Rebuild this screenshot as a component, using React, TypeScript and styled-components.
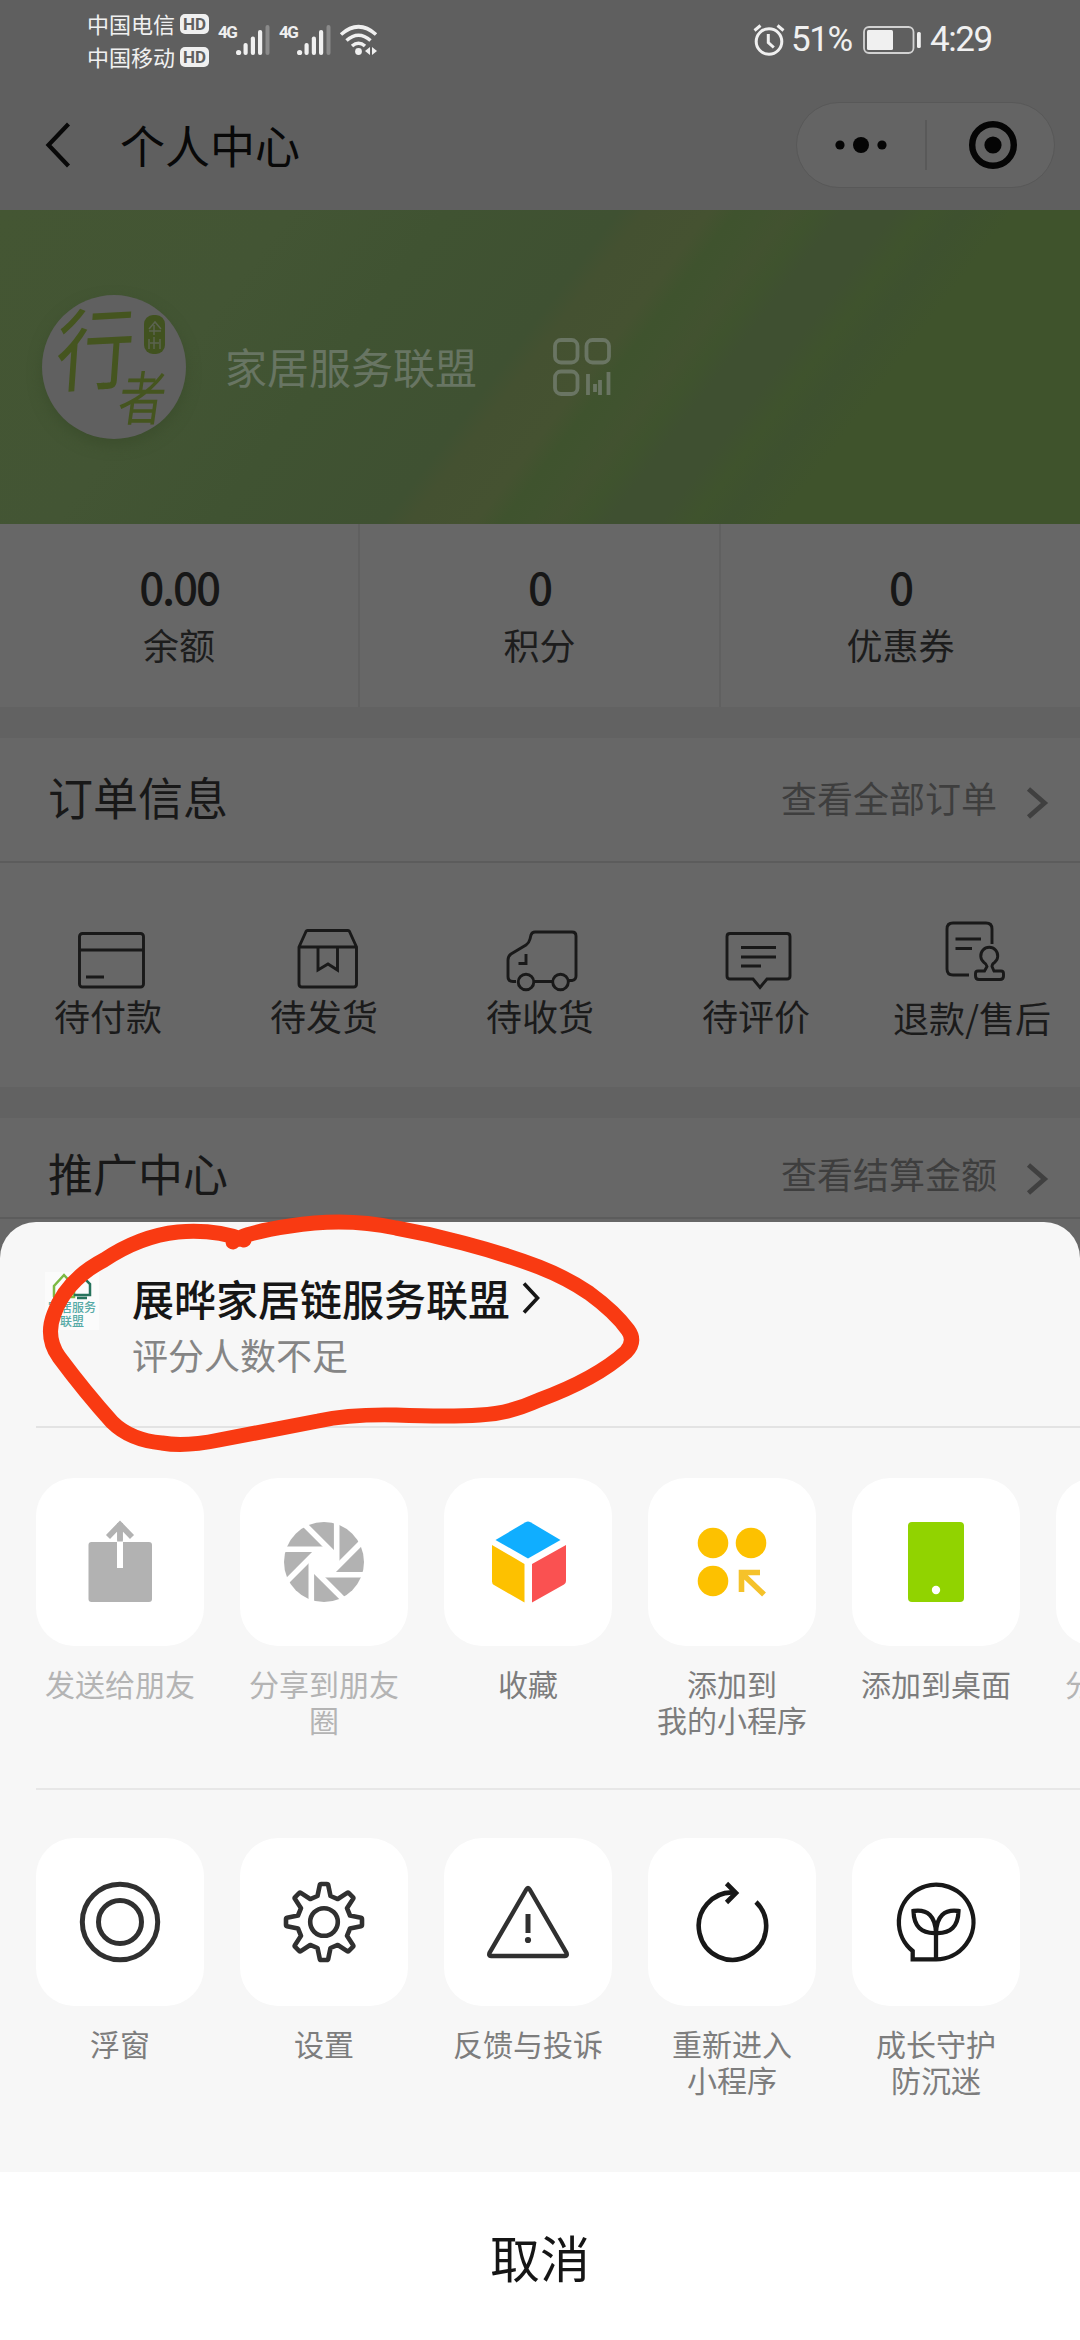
import React from "react";
import styled, { createGlobalStyle } from "styled-components";

const cjk = `"Noto Sans CJK SC", "Noto Sans", sans-serif`;

const Global = createGlobalStyle`
  * { box-sizing: border-box; }
  body { margin: 0; background: #676767; font-family: ${cjk}; }
  svg { display: block; flex: none; overflow: visible; }
`;

const Screen = styled.main`
  position: relative;
  display: flex;
  flex-direction: column;
  width: 1080px;
  height: 2340px;
  overflow: hidden;
  background: #676767;
`;

const Page = styled.section`
  display: flex;
  flex-direction: column;
  height: 1222px;
  flex: none;
`;

/* status bar */
const TopArea = styled.header`
  height: 210px;
  flex: none;
  background: #5f5f5f;
`;
const StatusBar = styled.div`
  display: flex;
  align-items: center;
  justify-content: space-between;
  height: 80px;
  padding: 0 86px 0 87px;
  color: #f0f0f0;
`;
const StatusGroup = styled.div`
  display: flex;
  align-items: center;
`;
const Carriers = styled.div`
  display: flex;
  flex-direction: column;
  margin-right: 9px;
`;
const Carrier = styled.div`
  display: flex;
  align-items: center;
  gap: 5px;
  height: 33px;
  font-size: 22px;
  line-height: 33px;
`;
const HdBadge = styled.span`
  width: 29px;
  height: 20px;
  margin-top: 0;
  border-radius: 5px;
  background: #f0f0f0;
  color: #5f5f5f;
  font: 700 17px/20px Roboto, sans-serif;
  text-align: center;
`;
const Signal = styled.div`
  display: flex;
  align-items: flex-start;
  width: 61px;
  height: 30px;
`;
const Net = styled.span`
  width: 18px;
  font: 700 17px/14px "Liberation Sans Narrow", Roboto, sans-serif;
  letter-spacing: -1.5px;
`;
const StatusNumber = styled.span<{ $w: number; $gap: number }>`
  width: ${(p) => p.$w}px;
  margin-left: ${(p) => p.$gap}px;
  font: 400 35px/40px Roboto, sans-serif;
  letter-spacing: -1.4px;
  white-space: nowrap;
`;

/* title bar */
const TitleBar = styled.div`
  display: flex;
  align-items: center;
  height: 130px;
  padding: 0 25px 0 46px;
`;
const PageTitle = styled.h1`
  flex: 1;
  margin: 0 0 0 50px;
  color: #080808;
  font-size: 45px;
  font-weight: 400;
  line-height: 60px;
`;
const Capsule = styled.div`
  display: flex;
  align-items: center;
  width: 259px;
  height: 86px;
  border: 1px solid #585858;
  border-radius: 43px;
  background: #646464;
`;
const CapsuleHalf = styled.div`
  display: flex;
  flex: 1;
  justify-content: center;
`;
const CapsuleRule = styled.i`
  width: 2px;
  height: 50px;
  background: #595959;
`;

/* profile banner */
const Banner = styled.div`
  display: flex;
  align-items: center;
  height: 314px;
  flex: none;
  padding-left: 42px;
  background: linear-gradient(
    127deg,
    #445633 0%, #435534 22%, #405332 34%, #3f5132 47%,
    #445131 49%, #455231 54%, #3f532e 56%, #40532f 58%,
    #425230 60%, #3f532e 62%, #3f5031 64%, #3f5031 68%,
    #3f532d 70.5%, #3e512f 73%, #3f532c 77%, #3f532c 100%
  );
`;
const Avatar = styled.div`
  width: 144px;
  height: 144px;
  border-radius: 50%;
  background: #606060;
  overflow: hidden;
  box-shadow: 0 6px 14px #3c4e2d;
`;
const UserName = styled.div`
  margin: -3px 76px 0 39px;
  color: #687563;
  font-size: 42px;
  line-height: 60px;
`;

/* balance row */
const Stats = styled.div`
  display: grid;
  grid-template-columns: 358px 361px 361px;
  height: 183px;
  flex: none;
`;
const Stat = styled.div`
  display: flex;
  flex-direction: column;
  align-items: center;
  padding-top: 36px;
  & + & { border-left: 2px solid #606060; }
`;
const StatValue = styled.b`
  color: #171717;
  font-size: 44px;
  font-weight: 500;
  letter-spacing: -2.2px;
  line-height: 52px;
`;
const StatLabel = styled.span`
  margin-top: 2px;
  color: #1d1d1d;
  font-size: 36px;
  line-height: 60px;
`;
const Band = styled.div`
  height: 31px;
  flex: none;
  background: #626262;
`;

/* sections */
const SectionHead = styled.div<{ $h: number; $top?: number }>`
  display: flex;
  align-items: center;
  height: ${(p) => p.$h}px;
  flex: none;
  padding: ${(p) => p.$top ?? 0}px 33px 0 48px;
  border-bottom: 2px solid #5c5c5c;
`;
const SectionTitle = styled.h2`
  flex: 1;
  margin: -6px 0 0;
  color: #181818;
  font-size: 45px;
  font-weight: 400;
  line-height: 60px;
`;
const SectionLink = styled.span`
  margin: -5px 28px 0 0;
  color: #3e3e3e;
  font-size: 36px;
  line-height: 54px;
`;
const Orders = styled.div`
  display: grid;
  grid-template-columns: repeat(5, 216px);
  height: 224px;
  flex: none;
`;
const Order = styled.div`
  display: flex;
  flex-direction: column;
  align-items: center;
  padding-top: 56px;
`;
const OrderLabel = styled.span<{ $drop?: boolean }>`
  margin-top: ${(p) => (p.$drop ? -7 : -9)}px;
  color: #1b1b1b;
  font-size: 36px;
  line-height: 54px;
  white-space: nowrap;
`;

/* bottom sheet */
const Sheet = styled.section`
  display: flex;
  flex-direction: column;
  flex: 1;
  border-radius: 36px 36px 0 0;
  background: #f7f7f7;
  overflow: hidden;
`;
const AppInfo = styled.div`
  display: flex;
  align-items: flex-start;
  height: 206px;
  flex: none;
  margin-left: 36px;
  padding: 50px 0 0 9px;
  border-bottom: 2px solid #e3e3e3;
`;
const AppLogo = styled.div`
  display: flex;
  flex-direction: column;
  align-items: center;
  width: 54px;
  height: 58px;
  background: #fbfbfb;
  color: #56aaa6;
  font-size: 12px;
  font-weight: 500;
  line-height: 14px;
`;
const AppText = styled.div`
  display: flex;
  flex-direction: column;
  margin-left: 33px;
`;
const AppName = styled.div`
  display: flex;
  align-items: center;
  gap: 12px;
  margin-top: -4px;
  color: #161616;
  font-size: 42px;
  font-weight: 500;
  line-height: 60px;
`;
const AppRating = styled.div`
  margin-top: -1px;
  color: #858585;
  font-size: 36px;
  line-height: 54px;
`;
const Actions = styled.div<{ $h: number; $top: number; $rule?: boolean }>`
  display: flex;
  gap: 36px;
  height: ${(p) => p.$h}px;
  flex: none;
  margin-left: 36px;
  padding-top: ${(p) => p.$top}px;
  border-bottom: ${(p) => (p.$rule ? "2px solid #e7e7e7" : "0")};
`;
const Action = styled.div`
  display: flex;
  flex-direction: column;
  align-items: center;
  width: 168px;
  flex: none;
`;
const Tile = styled.div`
  display: flex;
  align-items: center;
  justify-content: center;
  width: 168px;
  height: 168px;
  border-radius: 38px;
  background: #fff;
`;
const ActionLabel = styled.span<{ $dim?: boolean }>`
  margin-top: 20px;
  color: ${(p) => (p.$dim ? "#b4b4b4" : "#7d7d7d")};
  font-size: 30px;
  line-height: 35.5px;
  text-align: center;
  white-space: pre;
`;
const Cancel = styled.button`
  flex: 1;
  border: 0;
  padding: 0;
  background: #fff;
  color: #151515;
  font: 400 50px/70px ${cjk};
`;
const Annotation = styled.svg`
  position: absolute;
  left: 0;
  top: 1200px;
  pointer-events: none;
`;

const Bars = () => (
  <svg width="34" height="30" fill="#f0f0f0">
    <circle cx="2.6" cy="27.5" r="2.6" />
    <rect x="7.5" y="18" width="4.2" height="12" rx="2" />
    <rect x="14.8" y="11.5" width="4.2" height="18.5" rx="2" />
    <rect x="22" y="5" width="4.2" height="25" rx="2" />
    <rect x="29.5" y="0" width="4" height="30" rx="2" fill="#8a8a8a" />
  </svg>
);

const Wifi = () => (
  <svg width="38" height="30" fill="none" stroke="#f0f0f0" strokeWidth="3.6">
    <path d="M1 9.500Q18.500 -6 36 9.500M6.500 15.500Q18.500 5 30.500 15.500M12 21Q18.500 15.500 25 21" />
    <circle cx="18.500" cy="26.500" r="3.400" fill="#f0f0f0" stroke="none" />
    <path d="M30 22v8l-5-4zM32 22v8l5-4z" fill="#f0f0f0" stroke="none" />
  </svg>
);

const Alarm = () => (
  <svg width="32" height="32" fill="none" stroke="#f0f0f0" strokeWidth="3">
    <circle cx="16" cy="17.5" r="12.8" />
    <path d="M1.500 6.500L7.500 1.500M30.500 6.500L24.500 1.500" />
    <path d="M15.300 10v8.500l5.500 5" />
  </svg>
);

const BatterySvg = styled.svg`
  margin-left: 10px;
`;
const Battery = () => (
  <BatterySvg width="58" height="28">
    <rect x="1" y="1" width="49.5" height="26" rx="5" fill="none" stroke="#d2d2d2" strokeWidth="1.8" />
    <rect x="4" y="4" width="26" height="20" rx="1.5" fill="#f0f0f0" />
    <rect x="54" y="6" width="3.8" height="16" rx="1.5" fill="#f0f0f0" />
  </BatterySvg>
);

const SealAvatar = () => (
  <svg width="144" height="144" viewBox="0 0 144 144" fontFamily={cjk} fill="#45551f">
    <text fontSize="84" fontWeight="400" transform="translate(12 90) rotate(-3) skewX(-7) scale(.93 1.060)">行</text>
    <text fontSize="52" fontWeight="400" transform="translate(74 125) skewX(-8) scale(.9 1.120)">者</text>
    <rect x="102" y="20" width="21" height="39" rx="9" fill="#41521f" />
    <path d="M107 34L113 27L119 34M107 36H119M112 30V40M107 44V54M112 42V54M118 44V54M108 48H117" fill="none" stroke="#5b6350" strokeWidth="1.500" />
  </svg>
);

const QrGlyph = () => (
  <svg width="58" height="58" fill="none" stroke="#6a7563" strokeWidth="3.8">
    <rect x="2" y="2" width="22.5" height="22.5" rx="6" />
    <rect x="33.5" y="2" width="22.5" height="22.5" rx="6" />
    <rect x="2" y="33.5" width="22.5" height="22.5" rx="6" />
    <path d="M35 36v21M42 46v8M47 42v15M55.500 34v23" />
  </svg>
);

const ChevronSvg = styled.svg`
  margin-top: 6px;
`;
const LinkChevron = () => (
  <ChevronSvg width="22" height="32" fill="none" stroke="#404040" strokeWidth="4.8">
    <path d="M3.500 2l16 14-16 14" />
  </ChevronSvg>
);

const orderPaths: Record<string, React.ReactNode> = {
  pay: (
    <g transform="translate(6 0)">
      <rect x="3.5" y="14.5" width="64" height="53.5" rx="3" />
      <path d="M3.500 31h64M10 58h18" />
    </g>
  ),
  ship: (
    <g transform="translate(5 0)">
      <path d="M8 28L15 12.500q.5-1 1.500-1H57q1 0 1.500 1L65.500 28V65q0 3-3 3H11q-3 0-3-3zM8 28H65.500" />
      <path d="M27 28V51L37 45l9.500 6V28" />
    </g>
  ),
  receive: (
    <g transform="translate(2 0)">
      <path d="M12 62.500H9q-5 0-5-5V41q0-4 3-6l15-9q3-2 4-6l1-4q1-3 4-3H68q4 0 4 4V57q0 4-4 4.500h-3M30 62.500H48" />
      <path d="M14.500 44.500h7.500V35" />
      <circle cx="22" cy="63" r="7.800" />
      <circle cx="56.500" cy="63" r="7.800" />
    </g>
  ),
  review: (
    <g transform="translate(4 0)">
      <path d="M8 14.500H65q3 0 3 3V57q0 3-3 3H45l-7 8.500L31 60H8q-3 0-3-3V17.500q0-3 3-3z" />
      <path d="M19 28.500H54M19 38H54M19 47H39" />
    </g>
  ),
  refund: (
    <g transform="translate(4 0)">
      <path d="M31 56H15q-6 0-6-6V10q0-6 6-6H48q6 0 6 6V25M17.500 20H43M17.500 29.500H34" />
      <path d="M46.500 52L49 47.500Q48.500 45 46 43.500A8.500 8.500 0 1 1 56.500 43.500Q54 45 54 47.500L56 52H63q2.500 0 2.500 2.500V57q0 3.500-3.500 3.500H41q-3.500 0-3.500-3.500V54.500Q37.500 52 40 52z" />
    </g>
  ),
};

const OrderIcon = ({ kind }: { kind: string }) => (
  <svg width="76" height="78" viewBox="0 0 76 78" fill="none" stroke="#191919" strokeWidth="2.900">
    {orderPaths[kind]}
  </svg>
);

const toothed = Array.from({ length: 8 }, (_, i) => {
  const a = (i * Math.PI) / 4;
  const at = (dx: number, r: number) =>
    `${(42 + dx * Math.cos(a) + r * Math.sin(a)).toFixed(2)} ${(42 + dx * Math.sin(a) - r * Math.cos(a)).toFixed(2)}`;
  return `${i ? "L" : "M"}${at(-6.5, 26)}L${at(-4.2, 37)}Q${at(-4, 38)} ${at(-2.8, 38)}L${at(2.8, 38)}Q${at(4, 38)} ${at(4.2, 37)}L${at(6.5, 26)}`;
}).join("") + "Z";

const actionPaths: Record<string, React.ReactNode> = {
  send: (
    <>
      <rect x="10.500" y="22" width="63.500" height="60" rx="3" fill="#b2b2b2" />
      <path d="M42 22V3M30 17L42 4.500L54 17" stroke="#b2b2b2" strokeWidth="5.600" />
      <rect x="39" y="20.500" width="6" height="27.500" fill="#fff" />
      <path d="M42 3V21.500" stroke="#b2b2b2" strokeWidth="5.600" />
    </>
  ),
  moments: (
    <g transform="translate(42 42)">
      <circle r="40" fill="#b2b2b2" />
      <path d="M12.700 5.300L5.300 12.700H-5.300L-12.700 5.300V-5.300L-5.300 -12.700H5.300L12.700 -5.300Z" fill="#fff" />
      {[0, 45, 90, 135, 180, 225, 270, 315].map((d) => (
        <path key={d} d="M12.700 5.300V-43" stroke="#fff" strokeWidth="5.600" transform={`rotate(${d})`} />
      ))}
    </g>
  ),
  favorite: (
    <>
      <path d="M39.500 2.200Q42 .8 44.500 2.200L74.500 20L42 38.500L9.500 20Z" fill="#10aeff" />
      <path d="M6 25L38.500 44V82.500L8 65Q6 64 6 61.500Z" fill="#fdc100" />
      <path d="M80 25L46 44V82.500L78 64.500Q80 63.500 80 61Z" fill="#fa5151" />
    </>
  ),
  mine: (
    <>
      <g fill="#fdc100">
        <circle cx="23" cy="23" r="15.300" />
        <circle cx="61" cy="23" r="15.300" />
        <circle cx="23" cy="61" r="15.300" />
      </g>
      <path d="M51.500 72V52.500H70M52 53.500L74 74.500" stroke="#f5c22a" strokeWidth="5.600" />
    </>
  ),
  desktop: (
    <>
      <rect x="14" y="2" width="56" height="80" rx="4" fill="#91d300" />
      <circle cx="42" cy="70" r="4.200" fill="#fff" />
    </>
  ),
  float: (
    <g stroke="#303030" strokeWidth="5">
      <circle cx="42" cy="42" r="37.700" />
      <circle cx="42" cy="42" r="21.500" />
    </g>
  ),
  settings: (
    <g stroke="#303030" strokeWidth="4.600" strokeLinejoin="round">
      <path d={toothed} />
      <circle cx="42" cy="42" r="13.800" />
    </g>
  ),
  report: (
    <>
      <path d="M40.300 9.500Q42 6.500 43.700 9.500L80.500 73Q81.500 76 79 76H5Q2.500 76 3.500 73Z" stroke="#303030" strokeWidth="4.400" />
      <path d="M42 34V53" stroke="#303030" strokeWidth="5" />
      <circle cx="42" cy="60" r="3.100" fill="#303030" />
    </>
  ),
  reload: (
    <g stroke="#181818" strokeWidth="4.600">
      <path d="M66 22A33.700 33.700 0 1 1 45 12.500" />
      <path d="M36.500 3.500L46 13L36.500 22.500" />
    </g>
  ),
  guard: (
    <g stroke="#181818" strokeWidth="4.300">
      <path d="M42 79.300A37.300 37.300 0 1 0 18.700 71V79.300Z" />
      <path d="M42 79V52" />
      <path d="M19.500 31Q41 28 42 53Q20 54 19.500 31ZM64.500 31Q43 28 42 53Q64 54 64.500 31Z" />
    </g>
  ),
};

const ActionIcon = ({ kind }: { kind: string }) => (
  <svg width="84" height="84" viewBox="0 0 84 84" fill="none">
    {actionPaths[kind]}
  </svg>
);

const orders = [
  ["pay", "待付款"],
  ["ship", "待发货"],
  ["receive", "待收货"],
  ["review", "待评价"],
  ["refund", "退款/售后"],
];
const shareActions = [
  { kind: "send", label: "发送给朋友", dim: true },
  { kind: "moments", label: "分享到朋友\n圈", dim: true },
  { kind: "favorite", label: "收藏" },
  { kind: "mine", label: "添加到\n我的小程序" },
  { kind: "desktop", label: "添加到桌面" },
  { kind: "", label: "分享到电脑", dim: true },
];
const toolActions = [
  { kind: "float", label: "浮窗" },
  { kind: "settings", label: "设置" },
  { kind: "report", label: "反馈与投诉" },
  { kind: "reload", label: "重新进入\n小程序" },
  { kind: "guard", label: "成长守护\n防沉迷" },
];

export default function App() {
  return (
    <Screen>
      <Global />
      <Page>
        <TopArea>
          <StatusBar>
            <StatusGroup>
              <Carriers>
                <Carrier>中国电信<HdBadge>HD</HdBadge></Carrier>
                <Carrier>中国移动<HdBadge>HD</HdBadge></Carrier>
              </Carriers>
              <Signal><Net>4G</Net><Bars /></Signal>
              <Signal><Net>4G</Net><Bars /></Signal>
              <Wifi />
            </StatusGroup>
            <StatusGroup>
              <Alarm />
              <StatusNumber $w={62} $gap={6}>51%</StatusNumber>
              <Battery />
              <StatusNumber $w={64} $gap={9}>4:29</StatusNumber>
            </StatusGroup>
          </StatusBar>
          <TitleBar>
            <svg width="24" height="44" fill="none" stroke="#080808" strokeWidth="4.200">
              <path d="M22.500 1L2.500 22L22.500 43" />
            </svg>
            <PageTitle>个人中心</PageTitle>
            <Capsule>
              <CapsuleHalf>
                <svg width="52" height="18" fill="#050505">
                  <circle cx="5" cy="9" r="4.600" />
                  <circle cx="26" cy="9" r="8" />
                  <circle cx="47" cy="9" r="4.600" />
                </svg>
              </CapsuleHalf>
              <CapsuleRule />
              <CapsuleHalf>
                <svg width="48" height="48">
                  <circle cx="27" cy="24" r="20.800" fill="none" stroke="#050505" strokeWidth="6.400" />
                  <circle cx="27" cy="24" r="8.600" fill="#050505" />
                </svg>
              </CapsuleHalf>
            </Capsule>
          </TitleBar>
        </TopArea>
        <Banner>
          <Avatar><SealAvatar /></Avatar>
          <UserName>家居服务联盟</UserName>
          <QrGlyph />
        </Banner>
        <Stats>
          <Stat><StatValue>0.00</StatValue><StatLabel>余额</StatLabel></Stat>
          <Stat><StatValue>0</StatValue><StatLabel>积分</StatLabel></Stat>
          <Stat><StatValue>0</StatValue><StatLabel>优惠券</StatLabel></Stat>
        </Stats>
        <Band />
        <SectionHead $h={125}>
          <SectionTitle>订单信息</SectionTitle>
          <SectionLink>查看全部订单</SectionLink>
          <LinkChevron />
        </SectionHead>
        <Orders>
          {orders.map(([kind, label]) => (
            <Order key={kind}>
              <OrderIcon kind={kind} />
              <OrderLabel $drop={kind === "refund"}>{label}</OrderLabel>
            </Order>
          ))}
        </Orders>
        <Band />
        <SectionHead $h={101} $top={16}>
          <SectionTitle>推广中心</SectionTitle>
          <SectionLink>查看结算金额</SectionLink>
          <LinkChevron />
        </SectionHead>
      </Page>
      <Sheet>
        <AppInfo>
          <AppLogo>
            <svg width="44" height="28" fill="none" strokeWidth="2.500">
              <path d="M4 25V14L14 3L24 14V25H3" stroke="#7cb944" />
              <path d="M22 10L30 2L40 12V23H24M27 26H37" stroke="#27735c" />
              <circle cx="13" cy="16" r="2" fill="#3a8d58" />
            </svg>
            <span>家居服务</span>
            <span>联盟</span>
          </AppLogo>
          <AppText>
            <AppName>
              展晔家居链服务联盟
              <svg width="18" height="32" fill="none" stroke="#161616" strokeWidth="3.600">
                <path d="M2 1.500L15.500 16L2 30.500" />
              </svg>
            </AppName>
            <AppRating>评分人数不足</AppRating>
          </AppText>
        </AppInfo>
        <Actions $h={362} $top={50} $rule>
          {shareActions.map((a) => (
            <Action key={a.label}>
              <Tile>{a.kind && <ActionIcon kind={a.kind} />}</Tile>
              <ActionLabel $dim={a.dim}>{a.label}</ActionLabel>
            </Action>
          ))}
        </Actions>
        <Actions $h={382} $top={48}>
          {toolActions.map((a) => (
            <Action key={a.label}>
              <Tile><ActionIcon kind={a.kind} /></Tile>
              <ActionLabel>{a.label}</ActionLabel>
            </Action>
          ))}
        </Actions>
        <Cancel>取消</Cancel>
      </Sheet>
      <Annotation width="660" height="270" fill="none" stroke="#f93a12" strokeWidth="15" strokeLinecap="round" strokeLinejoin="round">
        <path d="M233 42C238 36 262 30 290 26Q345 17 396 28Q430 34 463 43Q505 54 539 67Q567 78 589 93Q615 112 628 130Q636 141 626 152Q596 179 539 200Q508 214 480 215Q450 217 396 215Q350 214 318 221L219 240Q185 247 162 243Q130 240 112 222Q85 192 59 157Q45 137 54 114Q66 80 104 60Q140 36 178 32Q215 29 244 40" />
      </Annotation>
    </Screen>
  );
}
